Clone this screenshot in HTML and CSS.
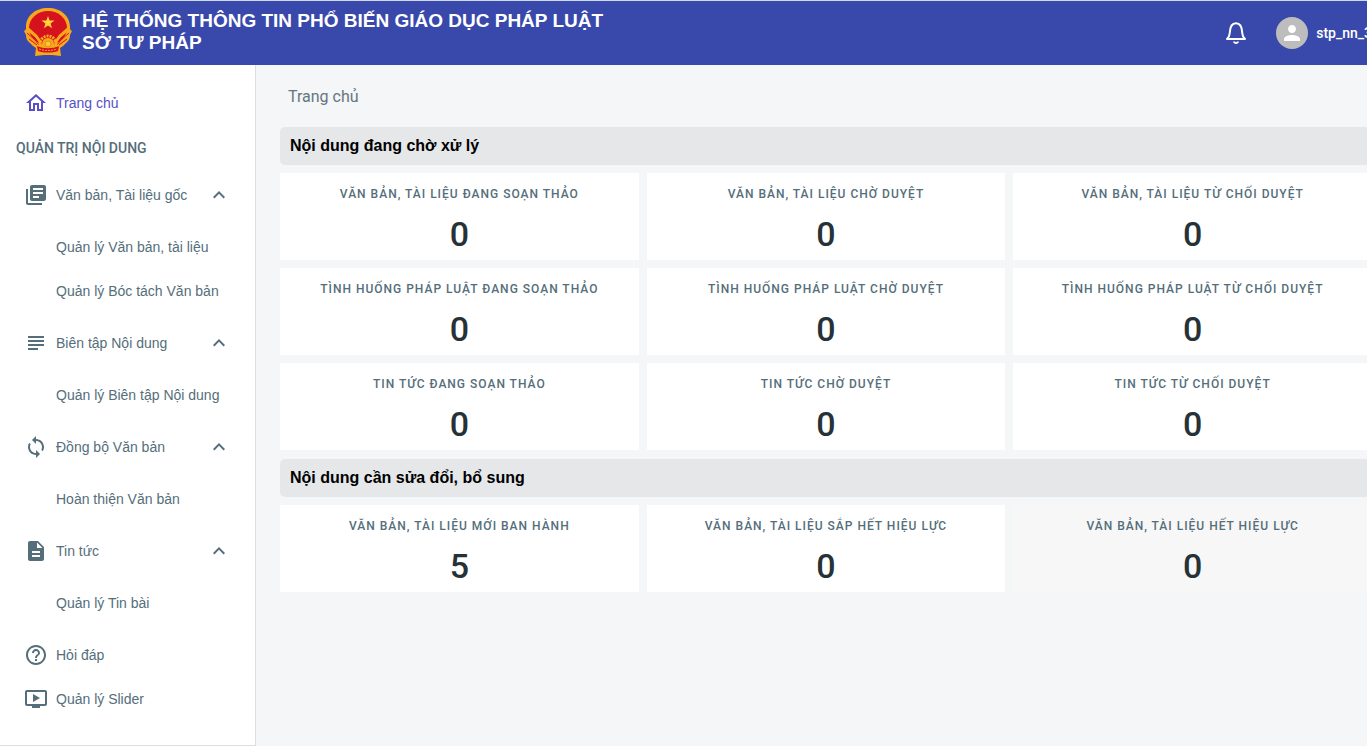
FILE: index.html
```html
<!DOCTYPE html>
<html lang="vi">
<head>
    <meta charset="UTF-8">
    <meta name="viewport" content="width=device-width, initial-scale=1.0">
    <title>Trang chủ</title>
    <link rel="stylesheet" href="styles.css">
</head>
<body>
    <div class="app">
        <header class="topbar">
            <a class="brand" href="#">
                <svg class="emblem" viewBox="0 0 48 48" aria-hidden="true">
                    <path fill="#f9a81c" d="M24 0C11 0 2 8 2 19c0 2 0 3-2 4l2 4c0 3 1 6 4 8l3 3 3 2-1 8 9-1h8l9 1-1-8 3-2 3-3c3-2 4-5 4-8l2-4c-2-1-2-2-2-4C46 8 37 0 24 0z"/>
                    <ellipse cx="24" cy="20" rx="19" ry="17" fill="#d5121e"/>
                    <path fill="#ffd23a" d="M24 8l1.600 4.600h4.900l-3.900 3 1.400 4.700-4-2.800-4 2.800 1.400-4.700-3.900-3h4.900z"/>
                    <path fill="none" stroke="#f9a81c" stroke-width="3" d="M4 21l8 7 5 7M44 21l-8 7-5 7"/>
                    <path fill="none" stroke="#d5121e" stroke-width="1" d="M3 25l8 7 4 5M5 31l8 6M45 25l-8 7-4 5M43 31l-8 6"/>
                    <circle cx="24" cy="36" r="6" fill="#f9a81c"/>
                    <circle cx="24" cy="36" r="8" fill="none" stroke="#f9a81c" stroke-width="3" stroke-dasharray="2 1"/>
                    <circle cx="24" cy="36" r="3" fill="#ffc832" stroke="#e08a17"/>
                    <path fill="#d5121e" d="M13 38c7 3 15 3 22 0l-1 5c-6 2-14 2-20 0z"/>
                    <path fill="none" stroke="#f9a81c" stroke-width="1" stroke-dasharray="2 1" d="M15 41c6 2 12 2 18 0"/>
                </svg>
                <span class="brand-title">HỆ THỐNG THÔNG TIN PHỔ BIẾN GIÁO DỤC PHÁP LUẬT<br>SỞ TƯ PHÁP</span>
            </a>
            <div class="topbar-right">
                <button class="bell" type="button" aria-label="Thông báo">
                    <svg viewBox="0 0 24 24" aria-hidden="true">
                        <path fill="none" stroke="#fff" stroke-width="2" stroke-linejoin="round" d="M3 18h18c-2-1.700-2.600-3.200-2.800-6.200-.2-5.500-1.700-9.500-6.200-9.500S6 6.300 5.800 11.800C5.600 14.800 5 16.300 3 18z"/>
                        <path fill="#fff" d="M9 20.500h2c.2.900 1.800.9 2 0h2c-.4 3.200-5.600 3.200-6 0z"/>
                    </svg>
                </button>
                <button class="user" type="button">
                    <svg class="avatar" viewBox="0 0 32 32" aria-hidden="true">
                        <circle cx="16" cy="16" r="16" fill="#bdbdbd"/>
                        <path fill="#fff" d="M16 16c2.200 0 4-1.800 4-4s-1.800-4-4-4-4 1.800-4 4 1.800 4 4 4zm0 2c-2.700 0-8 1.300-8 4v2h16v-2c0-2.700-5.300-4-8-4z"/>
                    </svg>
                    <span>stp_nn_3</span>
                </button>
            </div>
        </header>

        <div class="layout">
            <nav class="sidebar">
                <a class="nav-item active" href="#">
                    <svg class="icon" viewBox="0 0 24 24" aria-hidden="true"><path d="M12 5.690l5 4.500V18h-2v-6H9v6H7v-7.810l5-4.500M12 3L2 12h3v8h6v-6h2v6h6v-8h3L12 3z"/></svg>
                    Trang chủ
                </a>
                <h2 class="nav-heading">QUẢN TRỊ NỘI DUNG</h2>

                <button class="nav-item" type="button" aria-expanded="true">
                    <svg class="icon" viewBox="0 0 24 24" aria-hidden="true"><path d="M4 6H2v14c0 1.100.9 2 2 2h14v-2H4V6zm16-4H8c-1.100 0-2 .9-2 2v12c0 1.100.9 2 2 2h12c1.100 0 2-.9 2-2V4c0-1.100-.9-2-2-2zm-1 9H9V9h10v2zm-4 4H9v-2h6v2zm4-8H9V5h10v2z"/></svg>
                    Văn bản, Tài liệu gốc
                    <svg class="chevron" viewBox="0 0 24 24" aria-hidden="true"><path d="M12 8l-6 6 1.410 1.410L12 10.830l4.590 4.580L18 14z"/></svg>
                </button>
                <div class="subnav">
                    <a class="nav-item" href="#">Quản lý Văn bản, tài liệu</a>
                    <a class="nav-item" href="#">Quản lý Bóc tách Văn bản</a>
                </div>

                <button class="nav-item" type="button" aria-expanded="true">
                    <svg class="icon" viewBox="0 0 24 24" aria-hidden="true"><path d="M14 17H4v2h10v-2zm6-8H4v2h16V9zM4 15h16v-2H4v2zM4 5v2h16V5H4z"/></svg>
                    Biên tập Nội dung
                    <svg class="chevron" viewBox="0 0 24 24" aria-hidden="true"><path d="M12 8l-6 6 1.410 1.410L12 10.830l4.590 4.580L18 14z"/></svg>
                </button>
                <div class="subnav">
                    <a class="nav-item" href="#">Quản lý Biên tập Nội dung</a>
                </div>

                <button class="nav-item" type="button" aria-expanded="true">
                    <svg class="icon" viewBox="0 0 24 24" aria-hidden="true"><path d="M12 4V1L8 5l4 4V6c3.310 0 6 2.690 6 6 0 1.010-.25 1.970-.7 2.800l1.460 1.460C19.540 15.030 20 13.570 20 12c0-4.420-3.580-8-8-8zm0 14c-3.310 0-6-2.690-6-6 0-1.010.25-1.970.7-2.800L5.240 7.740C4.460 8.970 4 10.430 4 12c0 4.420 3.580 8 8 8v3l4-4-4-4v3z"/></svg>
                    Đồng bộ Văn bản
                    <svg class="chevron" viewBox="0 0 24 24" aria-hidden="true"><path d="M12 8l-6 6 1.410 1.410L12 10.830l4.590 4.580L18 14z"/></svg>
                </button>
                <div class="subnav">
                    <a class="nav-item" href="#">Hoàn thiện Văn bản</a>
                </div>

                <button class="nav-item" type="button" aria-expanded="true">
                    <svg class="icon" viewBox="0 0 24 24" aria-hidden="true"><path d="M14 2H6c-1.100 0-1.990.9-1.990 2L4 20c0 1.100.89 2 1.990 2H18c1.100 0 2-.9 2-2V8l-6-6zm2 16H8v-2h8v2zm0-4H8v-2h8v2zm-3-5V3.500L18.500 9H13z"/></svg>
                    Tin tức
                    <svg class="chevron" viewBox="0 0 24 24" aria-hidden="true"><path d="M12 8l-6 6 1.410 1.410L12 10.830l4.590 4.580L18 14z"/></svg>
                </button>
                <div class="subnav">
                    <a class="nav-item" href="#">Quản lý Tin bài</a>
                </div>

                <a class="nav-item" href="#">
                    <svg class="icon" viewBox="0 0 24 24" aria-hidden="true"><path d="M11 18h2v-2h-2v2zm1-16C6.480 2 2 6.480 2 12s4.480 10 10 10 10-4.480 10-10S17.520 2 12 2zm0 18c-4.410 0-8-3.590-8-8s3.590-8 8-8 8 3.590 8 8-3.590 8-8 8zm0-14c-2.210 0-4 1.790-4 4h2c0-1.100.9-2 2-2s2 .9 2 2c0 2-3 1.750-3 5h2c0-2.250 3-2.500 3-5 0-2.210-1.790-4-4-4z"/></svg>
                    Hỏi đáp
                </a>
                <a class="nav-item" href="#">
                    <svg class="icon" viewBox="0 0 24 24" aria-hidden="true"><path d="M21 3H3c-1.110 0-2 .89-2 2v12c0 1.100.89 2 2 2h5v2h8v-2h5c1.100 0 1.990-.9 1.990-2L23 5c0-1.110-.9-2-2-2zm0 14H3V5h18v12zm-5-6l-7 4V7z"/></svg>
                    Quản lý Slider
                </a>
            </nav>

            <main class="content">
                <h1 class="page-title">Trang chủ</h1>

                <h2 class="section-title">Nội dung đang chờ xử lý</h2>
                <div class="cards">
                    <div class="card">
                        <span class="card-label">VĂN BẢN, TÀI LIỆU ĐANG SOẠN THẢO</span>
                        <span class="card-value">0</span>
                    </div>
                    <div class="card">
                        <span class="card-label">VĂN BẢN, TÀI LIỆU CHỜ DUYỆT</span>
                        <span class="card-value">0</span>
                    </div>
                    <div class="card">
                        <span class="card-label">VĂN BẢN, TÀI LIỆU TỪ CHỐI DUYỆT</span>
                        <span class="card-value">0</span>
                    </div>
                    <div class="card">
                        <span class="card-label">TÌNH HUỐNG PHÁP LUẬT ĐANG SOẠN THẢO</span>
                        <span class="card-value">0</span>
                    </div>
                    <div class="card">
                        <span class="card-label">TÌNH HUỐNG PHÁP LUẬT CHỜ DUYỆT</span>
                        <span class="card-value">0</span>
                    </div>
                    <div class="card">
                        <span class="card-label">TÌNH HUỐNG PHÁP LUẬT TỪ CHỐI DUYỆT</span>
                        <span class="card-value">0</span>
                    </div>
                    <div class="card">
                        <span class="card-label">TIN TỨC ĐANG SOẠN THẢO</span>
                        <span class="card-value">0</span>
                    </div>
                    <div class="card">
                        <span class="card-label">TIN TỨC CHỜ DUYỆT</span>
                        <span class="card-value">0</span>
                    </div>
                    <div class="card">
                        <span class="card-label">TIN TỨC TỪ CHỐI DUYỆT</span>
                        <span class="card-value">0</span>
                    </div>
                </div>

                <h2 class="section-title">Nội dung cần sửa đổi, bổ sung</h2>
                <div class="cards">
                    <div class="card">
                        <span class="card-label">VĂN BẢN, TÀI LIỆU MỚI BAN HÀNH</span>
                        <span class="card-value">5</span>
                    </div>
                    <div class="card">
                        <span class="card-label">VĂN BẢN, TÀI LIỆU SẮP HẾT HIỆU LỰC</span>
                        <span class="card-value">0</span>
                    </div>
                    <div class="card card-hover">
                        <span class="card-label">VĂN BẢN, TÀI LIỆU HẾT HIỆU LỰC</span>
                        <span class="card-value">0</span>
                    </div>
                </div>
            </main>
        </div>
    </div>
</body>
</html>
```

FILE: styles.css
```css
* {
    box-sizing: border-box;
}

body {
    margin: 0;
    background-color: #f4f6f8;
    font-family: Roboto, "Liberation Sans", sans-serif;
    overflow-x: hidden;
}

button {
    border: 0;
    background: none;
    cursor: pointer;
}

a {
    text-decoration: none;
}

/* the dashboard runs a little wider than the window */
.app {
    display: flex;
    flex-direction: column;
    width: calc(100% + 29px);
    min-height: 100vh;
}

.topbar {
    display: flex;
    align-items: center;
    justify-content: space-between;
    height: 65px;
    padding: 0 24px;
    border-top: 1px solid #cfdaf0;
    background-color: #3949ab;
}

.brand {
    display: flex;
    align-items: center;
    gap: 10px;
    padding-bottom: 3px;
    color: #fff;
}

.emblem {
    width: 48px;
    height: 48px;
}

.brand-title {
    font-family: "Liberation Sans", Arial, sans-serif;
    font-size: 19px;
    font-weight: bold;
    line-height: 22px;
}

.topbar-right {
    display: flex;
    align-items: center;
    gap: 28px;
}

.bell {
    width: 24px;
    height: 24px;
    padding: 0;
}

.user {
    display: flex;
    align-items: center;
    gap: 8px;
    padding: 0;
    color: #fff;
    font-family: inherit;
    font-size: 14px;
    font-weight: 500;
}

.avatar {
    width: 32px;
    height: 32px;
}

.layout {
    display: flex;
    flex: 1;
}

.sidebar {
    flex: 0 0 256px;
    padding: 16px 16px 24px;
    border-right: 1px solid #dcdfe2;
    border-bottom: 1px solid #dcdfe2;
    background-color: #fff;
}

.nav-item {
    display: flex;
    align-items: center;
    gap: 8px;
    width: 100%;
    height: 44px;
    padding: 0 8px;
    color: #546e7a;
    font-family: "Liberation Sans", Arial, sans-serif;
    font-size: 14px;
    text-align: left;
    white-space: nowrap;
}

.nav-item.active {
    color: #5850c4;
}

.icon {
    width: 24px;
    height: 24px;
    fill: currentColor;
}

.chevron {
    width: 24px;
    height: 24px;
    margin-left: auto;
    fill: currentColor;
}

.nav-heading {
    margin: 0 0 2px;
    color: #546e7a;
    font-size: 14px;
    font-weight: 500;
    line-height: 46px;
}

.subnav {
    padding: 8px 0;
}

.subnav .nav-item {
    padding-left: 40px;
}

.content {
    flex: 1;
    padding: 16px 24px;
}

.page-title {
    margin: 0;
    padding: 0 8px 14px;
    color: #66757f;
    font-size: 16px;
    font-weight: 400;
    line-height: 32px;
}

.section-title {
    margin: 0 0 8px;
    padding: 0 10px;
    border-radius: 5px;
    background-color: #e5e7e9;
    color: #000;
    font-family: "Liberation Sans", Arial, sans-serif;
    font-size: 16px;
    font-weight: bold;
    line-height: 38px;
}

.cards {
    display: grid;
    grid-template-columns: repeat(3, 1fr);
    gap: 8px;
    margin-bottom: 9px;
}

.card {
    display: flex;
    flex-direction: column;
    align-items: center;
    gap: 10px;
    padding: 12px 8px 5px;
    background-color: #fff;
}

.card-hover {
    background-color: #f7f7f7;
}

.card-label {
    color: #546e7a;
    font-size: 12px;
    font-weight: 500;
    letter-spacing: 1px;
    line-height: 18px;
}

.card-value {
    color: #263238;
    font-size: 34px;
    font-weight: 500;
    line-height: 42px;
}
```
